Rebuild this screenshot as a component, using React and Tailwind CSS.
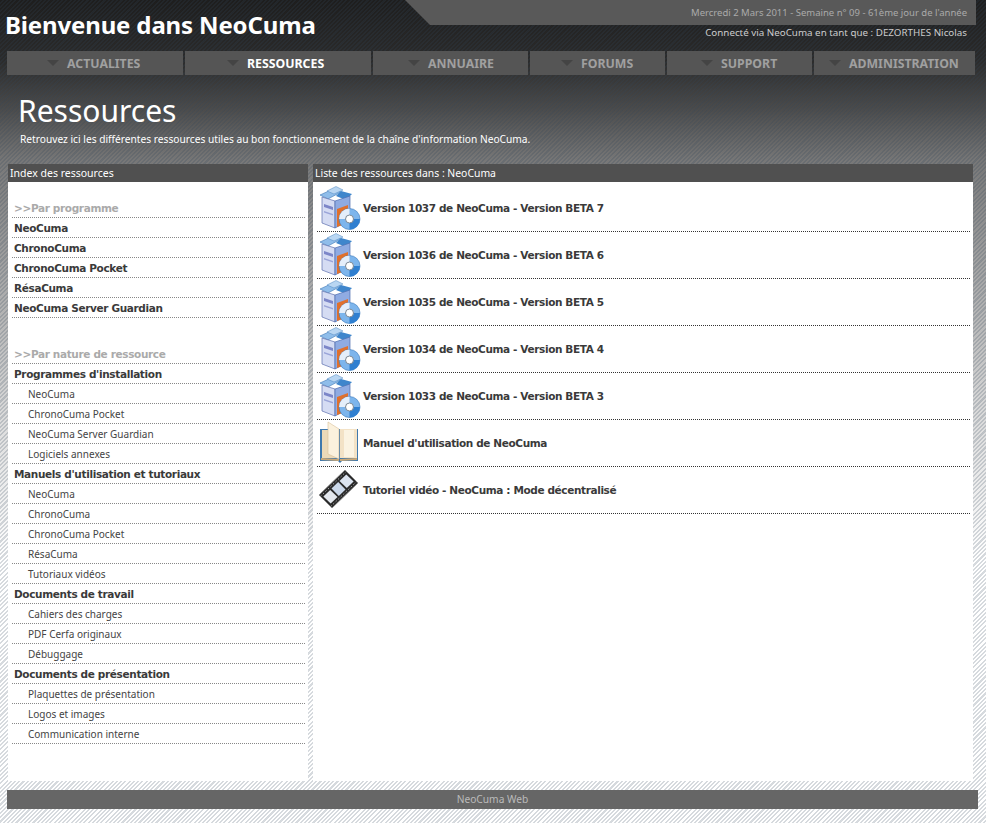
import React from "react";

const tahoma = "font-['Noto_Sans','DejaVu_Sans',sans-serif]";
const verdana = "font-['DejaVu_Sans',sans-serif]";

const nav = [
  { label: "ACTUALITES", w: "w-[176px]", pad: "pl-[40px]" },
  { label: "RESSOURCES", w: "w-[186px]", pad: "pl-[42px]", active: true },
  { label: "ANNUAIRE", w: "w-[155px]", pad: "pl-[35px]" },
  { label: "FORUMS", w: "w-[135px]", pad: "pl-[31px]" },
  { label: "SUPPORT", w: "w-[145px]", pad: "pl-[34px]" },
  { label: "ADMINISTRATION", w: "w-[161px]", pad: "pl-[15px]" },
];

const index1 = [
  { t: ">>Par programme", k: "h" },
  { t: "NeoCuma", k: "b" },
  { t: "ChronoCuma", k: "b" },
  { t: "ChronoCuma Pocket", k: "b" },
  { t: "RésaCuma", k: "b" },
  { t: "NeoCuma Server Guardian", k: "b" },
];

const index2 = [
  { t: ">>Par nature de ressource", k: "h" },
  { t: "Programmes d'installation", k: "b" },
  { t: "NeoCuma" },
  { t: "ChronoCuma Pocket" },
  { t: "NeoCuma Server Guardian" },
  { t: "Logiciels annexes" },
  { t: "Manuels d'utilisation et tutoriaux", k: "b" },
  { t: "NeoCuma" },
  { t: "ChronoCuma" },
  { t: "ChronoCuma Pocket" },
  { t: "RésaCuma" },
  { t: "Tutoriaux vidéos" },
  { t: "Documents de travail", k: "b" },
  { t: "Cahiers des charges" },
  { t: "PDF Cerfa originaux" },
  { t: "Débuggage" },
  { t: "Documents de présentation", k: "b" },
  { t: "Plaquettes de présentation" },
  { t: "Logos et images" },
  { t: "Communication interne" },
];

const resources = [
  { t: "Version 1037 de NeoCuma - Version BETA 7", i: "box" },
  { t: "Version 1036 de NeoCuma - Version BETA 6", i: "box" },
  { t: "Version 1035 de NeoCuma - Version BETA 5", i: "box" },
  { t: "Version 1034 de NeoCuma - Version BETA 4", i: "box" },
  { t: "Version 1033 de NeoCuma - Version BETA 3", i: "box" },
  { t: "Manuel d'utilisation de NeoCuma", i: "book" },
  { t: "Tutoriel vidéo - NeoCuma : Mode décentralisé", i: "film" },
];

function BoxIcon() {
  return (
    <svg width="42" height="44" viewBox="0 0 42 44">
      <path d="M1 9 L14 3 L22 6 L9 13 Z" fill="#8fbdea" stroke="#3f78b5" strokeWidth="0.6" />
      <path d="M8 5 L17 0.5 L24 4 L15 8 Z" fill="#b9d6f2" stroke="#4f86c0" strokeWidth="0.5" />
      <path d="M22 5 L33 8 L27 14 L17 10 Z" fill="#3f86cc" />
      <path d="M3 11 L16 15 L16 42 L3 37 Z" fill="#d5dcf3" stroke="#5b6fae" strokeWidth="0.7" />
      <path d="M16 15 L31 10 L31 34 L16 42 Z" fill="#8fabe2" stroke="#4f6fb0" strokeWidth="0.7" />
      <path d="M5 18 L14 21 L14 24 L5 21 Z" fill="#7c86c8" />
      <path d="M5 25 L14 28 L14 29.5 L5 26.5 Z" fill="#9aa4d8" />
      <path d="M18 23 L29 19 L29 37 L18 41 Z" fill="#e0702c" />
      <circle cx="30.5" cy="33" r="10.5" fill="#7db5ec" stroke="#3a78bb" strokeWidth="0.6" />
      <path d="M30.5 22.5 A10.5 10.5 0 0 0 20 33 L30.5 33 Z" fill="#e4eefa" />
      <path d="M30.5 33 L41 33 A10.5 10.5 0 0 1 30.5 43.5 Z" fill="#2f7fd0" />
      <circle cx="30.5" cy="33" r="4" fill="#fff" stroke="#7b8794" strokeWidth="1" />
    </svg>
  );
}

function BookIcon() {
  return (
    <svg width="42" height="44" viewBox="0 0 42 44">
      <path d="M1 8 L39 8 L39 40 L23 40 L21 42 L19 40 L1 40 Z" fill="#3f78ad" />
      <path d="M3 9 L19 9 L19 37 L3 37 Z" fill="#ecd9b8" />
      <path d="M21 8 L38 8 L38 37 L21 37 Z" fill="#f3e2c6" />
      <path d="M25 9 L35 9 L35 36 L25 36 Z" fill="#fbf3e2" />
      <path d="M9 1 L20 8 L20 38 L9 33 Z" fill="#fbf1dd" stroke="#d8c098" strokeWidth="0.6" />
      <path d="M2 37 L20 38 L20 40 L2 39 Z" fill="#caa877" />
      <path d="M21 38 L38 37 L38 39 L21 40 Z" fill="#caa877" />
    </svg>
  );
}

function FilmIcon() {
  return (
    <svg width="42" height="44" viewBox="0 0 42 44">
      <path d="M0 27 L26 2 L39 15 L13 40 Z" fill="#2a2a2a" stroke="#8a8a8a" strokeWidth="0.8" strokeLinejoin="round" />
      <path d="M4.4 28.4 L11.2 21.9 L18.5 29.1 L11.7 35.6 Z" fill="#e4e8ee" />
      <path d="M12.5 20.6 L19.2 14.1 L26.5 21.4 L19.8 27.9 Z" fill="#cbd8ea" />
      <path d="M20.5 12.9 L27.3 6.4 L34.6 13.6 L27.8 20.1 Z" fill="#dce4f0" />
      <path d="M1.4 28.4 L27.4 3.4 M11.6 38.6 L37.6 13.6" stroke="#aaa" strokeWidth="1" strokeDasharray="1.5 2" fill="none" />
    </svg>
  );
}

function ResIcon({ kind }) {
  if (kind === "book") return <BookIcon />;
  if (kind === "film") return <FilmIcon />;
  return <BoxIcon />;
}

function IndexRow({ row }) {
  let cls = `${tahoma} text-[10px] leading-[21px] font-normal text-[#444] pl-[16px]`;
  if (row.k === "b") cls = `${verdana} text-[10.5px] leading-[21px] tracking-[-0.35px] font-bold text-[#3a3a3a] pl-[2px]`;
  if (row.k === "h") cls = `${verdana} text-[10.5px] leading-[21px] tracking-[-0.35px] font-bold text-[#aaa] pl-[2px]`;
  return (
    <div className={`h-[20px] border-b border-dotted border-[#888] whitespace-nowrap ${cls}`}>
      {row.t}
    </div>
  );
}

export default function App() {
  return (
    <div
      className={`relative w-[986px] h-[823px] overflow-hidden bg-[repeating-linear-gradient(135deg,rgba(50,70,90,0)_0px,rgba(50,70,90,0)_1.5px,rgba(50,70,90,0.2)_1.5px,rgba(50,70,90,0.2)_3px),linear-gradient(180deg,#1e1e1e_0px,#2b2b2b_60px,#4c4c4c_110px,#777777_160px,#a8a8a8_280px,#dcdcdc_420px,#ffffff_560px)] ${tahoma}`}
    >
      <header className="flex justify-between items-start h-[51px]">
        <h1 className={`${tahoma} font-bold text-[24px] tracking-[-0.15px] leading-[30px] text-white pl-[5px] pt-[10px] whitespace-nowrap`}>
          Bienvenue dans NeoCuma
        </h1>
        <div className="w-[571px] mr-[10px] text-right">
          <div className="h-[25px] leading-[25px] pr-[9px] bg-[#595959] text-[#aaa] text-[9.5px] [clip-path:polygon(0_0,100%_0,100%_100%,25px_100%)]">
            Mercredi 2 Mars 2011 - Semaine n° 09 - 61ème jour de l'année
          </div>
          <div className="h-[14px] mt-[1px] leading-[14px] pr-[9px] text-[#ccc] text-[9.8px]">
            Connecté via NeoCuma en tant que : DEZORTHES Nicolas
          </div>
        </div>
      </header>

      <nav className="flex gap-[2px] h-[24px] pl-[7px]">
        {nav.map((n) => (
          <div
            key={n.label}
            className={`${n.w} ${n.pad} flex items-center gap-[8px] bg-[#555] text-[12.3px] font-bold ${n.active ? "text-white" : "text-[#a0a0a0]"}`}
          >
            <span className="w-0 h-0 border-x-[6px] border-x-transparent border-t-[6px] border-t-[#444]" />
            <span className="whitespace-nowrap pt-[2px]">{n.label}</span>
          </div>
        ))}
      </nav>

      <div className="pl-[18px] pt-[16px] h-[89px] text-white">
        <h2 className="text-[30px] leading-[40px] font-normal whitespace-nowrap">Ressources</h2>
        <p className="text-[10.2px] leading-[14px] pl-[2px] mt-[1px] whitespace-nowrap">
          Retrouvez ici les différentes ressources utiles au bon fonctionnement de la chaîne d'information NeoCuma.
        </p>
      </div>

      <main className="flex gap-[5px] pl-[8px] h-[617px]">
        <section className="w-[300px] flex flex-col">
          <div className="h-[18px] bg-[#505050] text-white text-[10.5px] leading-[18px] pl-[2px]">Index des ressources</div>
          <div className="flex-1 bg-white pt-[16px] pl-[4px] pr-[3px]">
            {index1.map((r) => (
              <IndexRow key={r.t} row={r} />
            ))}
            <div className="h-[26px]" />
            {index2.map((r, i) => (
              <IndexRow key={i} row={r} />
            ))}
          </div>
        </section>
        <section className="w-[660px] flex flex-col">
          <div className="h-[18px] bg-[#505050] text-white text-[10.4px] leading-[18px] pl-[2px]">
            Liste des ressources dans : NeoCuma
          </div>
          <div className="flex-1 bg-white pt-[3px] pl-[4px] pr-[3px]">
            {resources.map((r) => (
              <div key={r.t} className="h-[47px] flex items-center gap-[2px] pl-[2px] border-b border-dotted border-[#333]">
                <ResIcon kind={r.i} />
                <span className={`${verdana} text-[10.5px] tracking-[-0.38px] pt-[2px] font-bold text-[#3a3a3a] whitespace-nowrap`}>{r.t}</span>
              </div>
            ))}
          </div>
        </section>
      </main>

      <footer className="mt-[9px] ml-[7px] w-[971px] h-[19px] bg-[#666] text-[#bbb] text-[10.2px] leading-[19px] text-center">
        NeoCuma Web
      </footer>
    </div>
  );
}
